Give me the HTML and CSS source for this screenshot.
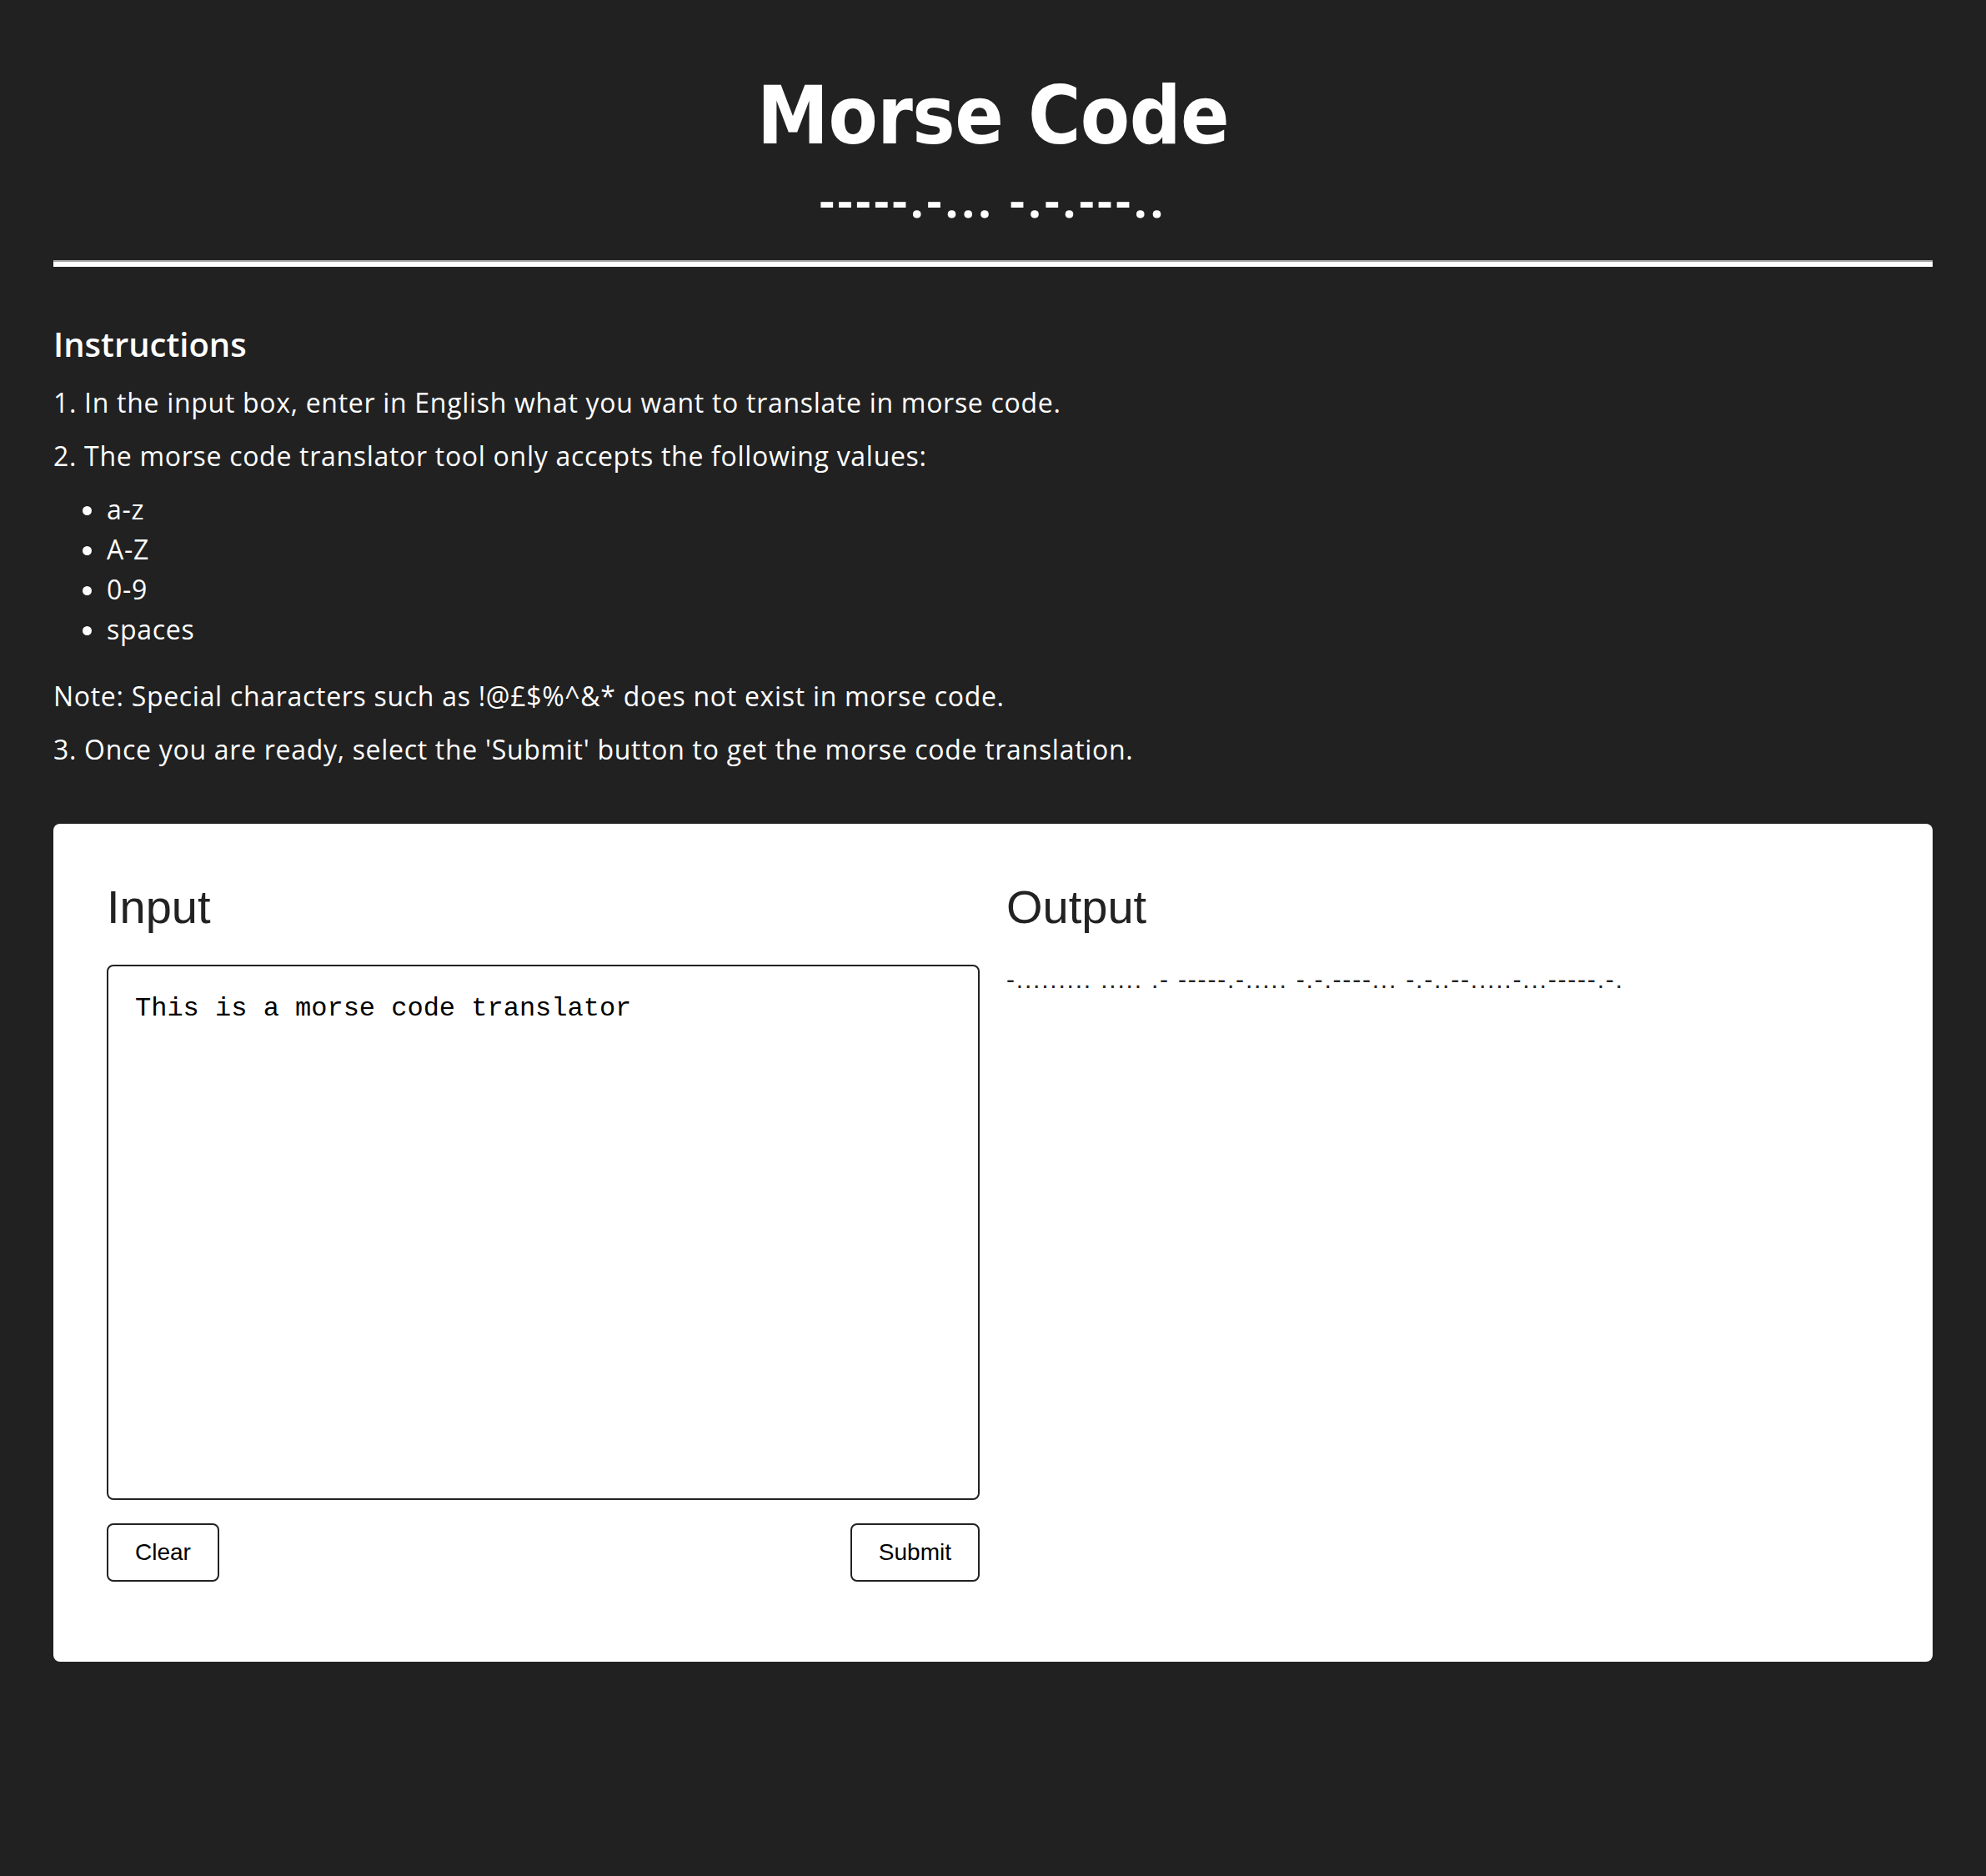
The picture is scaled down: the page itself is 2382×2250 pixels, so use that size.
FILE: index.html
```html
<!DOCTYPE html>
<html lang="en">
<head>
<meta charset="utf-8">
<title>Morse Code</title>
<link rel="stylesheet" href="styles.css">
</head>
<body>
<div class="page">
  <header class="header">
    <h1 class="title">Morse Code</h1>
    <div class="subtitle">-----.-... -.-.---..</div>
  </header>
  <hr class="divider">
  <section class="instructions">
    <h2 class="instructions-title">Instructions</h2>
    <p class="text">1. In the input box, enter in English what you want to translate in morse code.</p>
    <p class="text">2. The morse code translator tool only accepts the following values:</p>
    <ul class="values">
      <li>a-z</li>
      <li>A-Z</li>
      <li>0-9</li>
      <li>spaces</li>
    </ul>
    <p class="text">Note: Special characters such as !@£$%^&amp;* does not exist in morse code.</p>
    <p class="text">3. Once you are ready, select the 'Submit' button to get the morse code translation.</p>
  </section>
  <section class="card">
    <div class="column">
      <h2 class="card-title">Input</h2>
      <textarea class="input-box">This is a morse code translator</textarea>
      <div class="actions">
        <button class="btn" type="button">Clear</button>
        <button class="btn" type="button">Submit</button>
      </div>
    </div>
    <div class="column">
      <h2 class="card-title">Output</h2>
      <p class="output">-......... ..... .- -----.-..... -.-.----... -.-..--.....-...-----.-.</p>
    </div>
  </section>
</div>
</body>
</html>
```
FILE: styles.css
```css
html, body {
  margin: 0;
  padding: 0;
  background: #212121;
}

body {
  color: #ffffff;
  font-family: "Open Sans", "Noto Sans", sans-serif;
}

.page {
  padding: 0 64px 64px;
}

.header {
  padding-top: 79px;
  text-align: center;
}

.title {
  margin: 0;
  font-family: "DejaVu Sans Condensed", "DejaVu Sans", sans-serif;
  font-weight: 700;
  font-size: 96px;
  line-height: 120px;
  letter-spacing: -0.5px;
}

.subtitle {
  margin-top: 12px;
  font-family: "Open Sans", sans-serif;
  font-weight: 700;
  font-size: 56px;
  line-height: 56px;
  letter-spacing: 3.8px;
}

.divider {
  margin: 45px 0 0;
  border: 0;
  border-top: 2px solid #a5a5a5;
  height: 6px;
  background: #ffffff;
}

.instructions-title {
  margin: 63px 0 0;
  font-size: 40px;
  line-height: 60px;
  font-weight: 600;
}

.text {
  margin: 16px 0;
  font-size: 32px;
  line-height: 48px;
  letter-spacing: 0.7px;
}

.values {
  margin: 16px 0 32px;
  padding-left: 64px;
  font-size: 32px;
  line-height: 48px;
  letter-spacing: 0.7px;
}

.card {
  margin-top: 65px;
  background: #ffffff;
  border-radius: 8px;
  padding: 64px;
  display: grid;
  grid-template-columns: 1fr 1fr;
  column-gap: 32px;
  color: #222222;
}

.column {
  display: flex;
  flex-direction: column;
  min-width: 0;
}

.card-title {
  margin: 4px 0 37px;
  font-family: "Liberation Sans", Arial, sans-serif;
  font-weight: 400;
  font-size: 56px;
  line-height: 64px;
  color: #222222;
}

.input-box {
  box-sizing: border-box;
  width: 100%;
  height: 642px;
  padding: 32px;
  border: 2px solid #222222;
  border-radius: 8px;
  font-family: "Liberation Mono", "Courier New", monospace;
  font-size: 32px;
  color: #000000;
  resize: none;
  background: #ffffff;
}

.actions {
  display: flex;
  justify-content: space-between;
  margin-top: 28px;
  margin-bottom: 32px;
}

.btn {
  font-family: "Liberation Sans", Arial, sans-serif;
  font-size: 28px;
  line-height: 34px;
  padding: 16px 32px;
  border: 2px solid #222222;
  border-radius: 8px;
  background: #ffffff;
  color: #000000;
}

.output {
  margin: 0;
  font-family: "Liberation Sans", Arial, sans-serif;
  font-size: 30px;
  line-height: 36px;
  letter-spacing: 1.8px;
  color: #222222;
}
```
